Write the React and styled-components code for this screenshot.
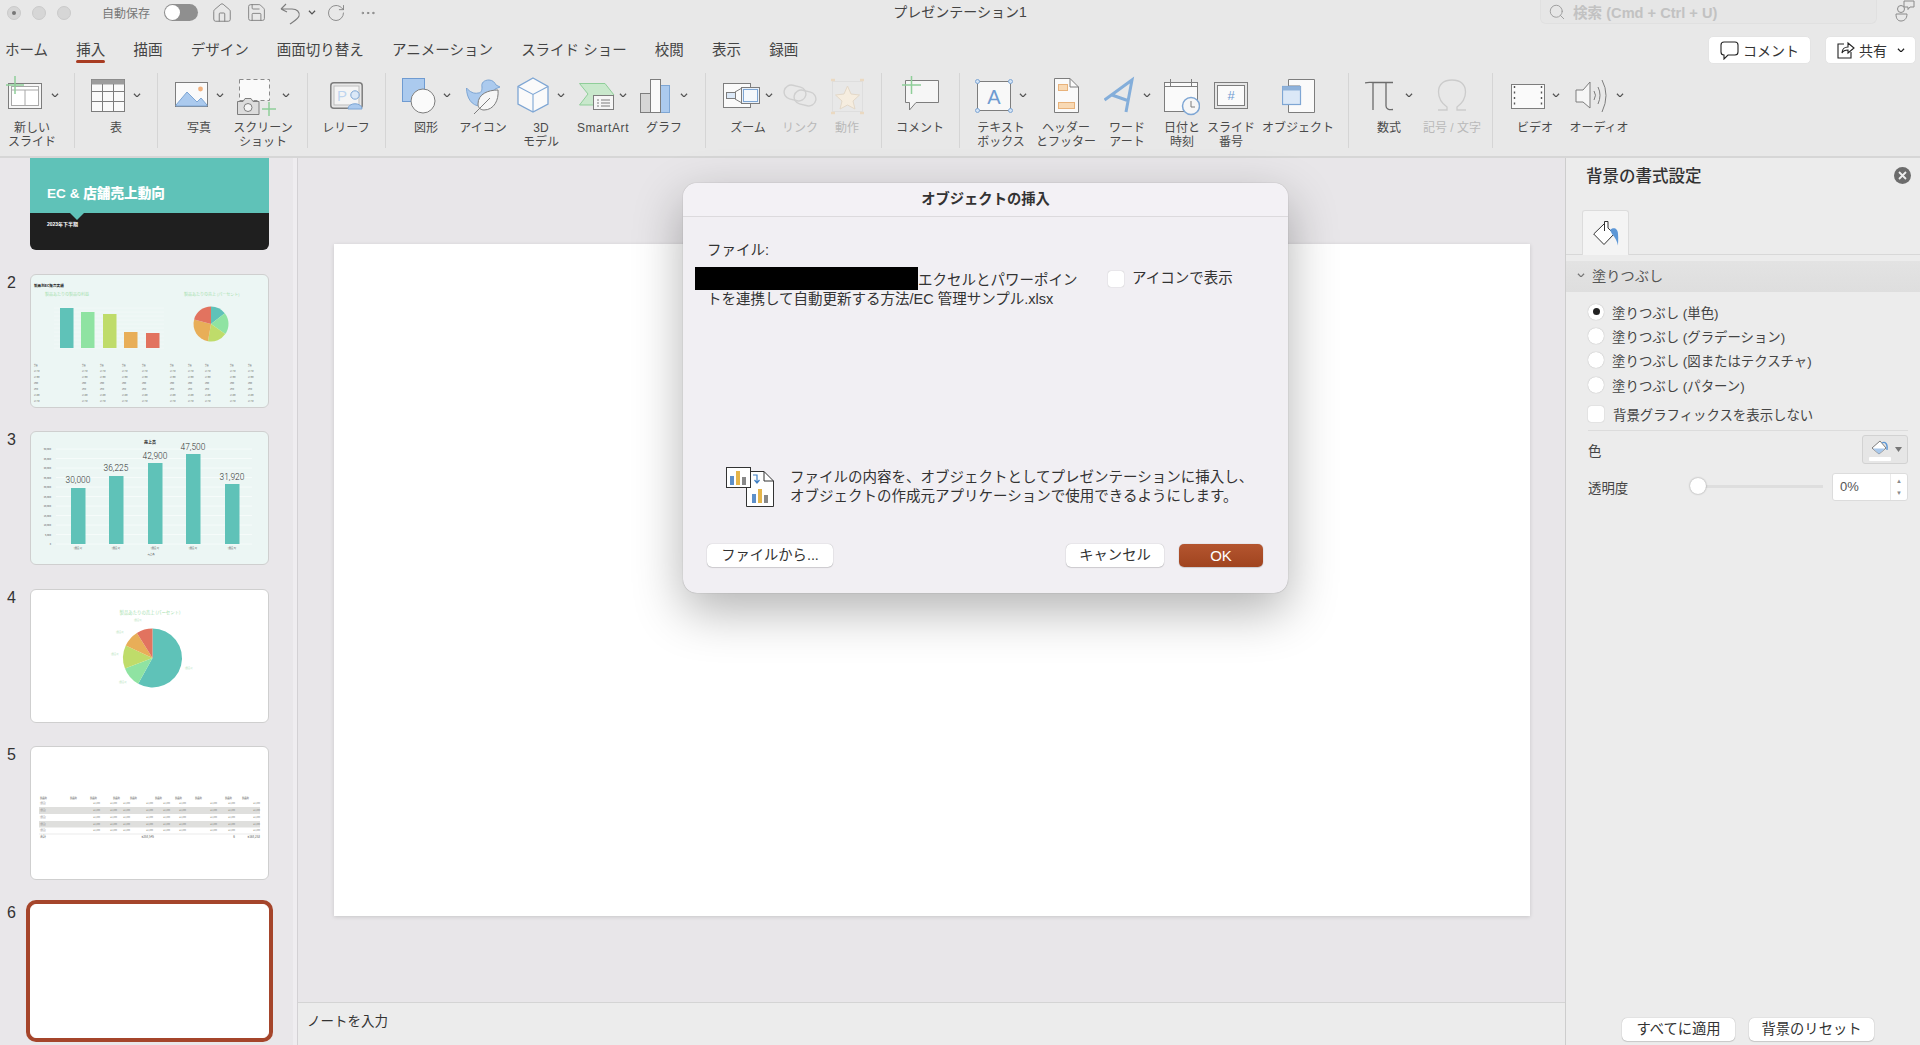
import React from 'react';
import styled, { createGlobalStyle } from 'styled-components';
import { Search, Home, Save, RotateCw, MoreHorizontal } from 'lucide-react';

const GlobalStyle = createGlobalStyle`
  html, body { margin: 0; padding: 0; background: #e8e8e8; }
  body { font-family: "Liberation Sans", "Noto Sans CJK JP", sans-serif; color: #333; }
  * { box-sizing: border-box; }
`;

const GRAY = '#7d7d7d';
const BLUE = '#7ea6d4';
const BLUE_FILL = '#abcaee';
const GREEN = '#8fce99';
const TEAL = '#5fc2b8';
const LIME = '#bfdc6a';
const MINT = '#8fe3a2';
const ORANGE = '#e8ae58';
const RED = '#e2735f';

const Page = styled.div`
  position: relative;
  width: 1920px;
  height: 1045px;
  overflow: hidden;
  display: flex;
  flex-direction: column;
  background: #e8e8e8;
`;

/* title bar */
const TitleBar = styled.div`
  height: 32px;
  display: grid;
  grid-template-columns: 1fr auto 1fr;
  color: #555;
`;
const TitleLeft = styled.div`
  display: flex;
  align-items: center;
  height: 25px;
  padding-left: 7px;
`;
const TrafficLight = styled.span`
  width: 14px;
  height: 14px;
  border-radius: 50%;
  background: #d6d6d6;
  border: 1px solid #cacaca;
  margin-right: 11px;
  display: flex;
  align-items: center;
  justify-content: center;
  &::after {
    content: '';
    width: 4px;
    height: 4px;
    border-radius: 50%;
    background: ${p => (p.$dot ? '#777' : 'transparent')};
  }
`;
const AutoSave = styled.span`
  font-size: 12px;
  color: #777;
  margin-left: 20px;
  width: 62px;
`;
const Toggle = styled.span`
  width: 34px;
  height: 17px;
  border-radius: 9px;
  background: #8f8f8f;
  padding: 1px;
  margin-right: 13px;
  display: flex;
  &::before {
    content: '';
    width: 15px;
    height: 15px;
    border-radius: 50%;
    background: #fff;
  }
`;
const QuickIcon = styled.span`
  display: flex;
  margin-right: ${p => p.$mr ?? 13}px;
  color: #7c7c7c;
`;
const DocTitle = styled.div`
  font-size: 14px;
  line-height: 25px;
  color: #444;
`;
const TitleRight = styled.div`
  display: flex;
  justify-content: flex-end;
  height: 25px;
  padding-right: 5px;
`;
const SearchBox = styled.div`
  width: 337px;
  height: 24px;
  margin-right: 18px;
  border: 1px solid #e0e0e0;
  border-top: 0;
  border-radius: 0 0 6px 6px;
  background: #e6e6e6;
  display: flex;
  align-items: center;
  gap: 7px;
  padding-left: 7px;
  font-size: 14.6px;
  font-weight: 700;
  color: #c2c2c2;
`;

/* tabs */
const TabRow = styled.div`
  height: 36px;
  display: flex;
  align-items: center;
  padding: 0 4px 0 5px;
`;
const Tab = styled.span`
  position: relative;
  font-size: 14.5px;
  color: #444;
  margin-right: 28.2px;
  top: -2px;
  ${p => p.$active && `
    &::after {
      content: '';
      position: absolute;
      left: 0;
      right: 0;
      bottom: -4px;
      height: 3px;
      border-radius: 2px;
      background: #a83c22;
    }
  `}
`;
const TopButton = styled.button`
  height: 28px;
  width: ${p => p.$w}px;
  margin-left: ${p => p.$ml ?? 0}px;
  border: 1px solid #e4e4e4;
  border-radius: 5px;
  background: #fff;
  font: inherit;
  font-size: 14px;
  color: #333;
  display: flex;
  align-items: center;
  justify-content: center;
  gap: 4px;
  padding: 0;
  svg:last-child:not(:first-child) { margin-left: 6px; }
`;
const PushRight = styled.span`
  margin-left: auto;
`;

/* ribbon */
const Ribbon = styled.div`
  height: 90px;
  padding-top: 5px;
  display: flex;
  align-items: flex-start;
  border-bottom: 2px solid #d6d6d6;
`;
const Group = styled.div`
  width: ${p => p.$w}px;
  height: 75px;
  padding: 1px 0 0 ${p => p.$pl ?? 0}px;
  display: flex;
  border-right: ${p => (p.$last ? '0' : '1px solid #d5d5d5')};
`;
const Item = styled.div`
  width: ${p => p.$w}px;
  display: flex;
  flex-direction: column;
  align-items: center;
`;
const IconSlot = styled.div`
  height: 42px;
  display: flex;
  align-items: center;
  gap: ${p => p.$gap ?? 8}px;
  margin-bottom: 5px;
`;
const ItemLabel = styled.span`
  font-size: 12px;
  line-height: 14px;
  text-align: center;
  white-space: nowrap;
  letter-spacing: ${p => (p.$latin ? '0.6px' : '0')};
  color: ${p => (p.$off ? '#b9b9b9' : '#4a4a4a')};
`;

/* body */
const Body = styled.div`
  flex: 1;
  min-height: 0;
  display: flex;
`;
const Sidebar = styled.div`
  width: 298px;
  flex: none;
  padding-right: 5px;
  background: #e9e7ea;
  border-right: 1px solid #d3d1d4;
  box-shadow: inset -4px 0 0 #efedf0;
  display: flex;
  flex-direction: column;
  gap: 23.5px;
`;
const SlideRow = styled.div`
  display: flex;
  align-items: flex-start;
`;
const SlideNum = styled.span`
  width: 30px;
  padding: 0 0 0 7px;
  font-size: 16px;
  line-height: 18px;
  color: #333;
`;
const Thumb = styled.div`
  width: 239px;
  height: 134px;
  border-radius: 6px;
  overflow: hidden;
  background: ${p => p.$bg ?? '#fff'};
  border: 1px solid #cfcfcf;
  ${p => p.$selected && `
    border-color: #fff;
    box-shadow: 0 0 0 4px #a5452b;
  `}
  svg { display: block; }
`;
const TitleThumb = styled.div`
  width: 239px;
  height: 92px;
  border-radius: 0 0 6px 6px;
  overflow: hidden;
  margin-left: 30px;
  background: #1f1f1f;
  color: #fff;
  font-weight: 700;
`;
const TitleBand = styled.div`
  position: relative;
  height: 55px;
  background: ${TEAL};
  padding: 27px 0 0 17px;
  font-size: 13.6px;
  font-weight: 900;
  line-height: 18px;
  &::after {
    content: '';
    position: absolute;
    left: 40px;
    bottom: -7px;
    border: 7px solid transparent;
    border-bottom: 0;
    border-top-color: ${TEAL};
  }
`;
const TitleDate = styled.div`
  padding: 7px 0 0 17px;
  font-size: 5px;
  line-height: 8px;
`;

const Main = styled.div`
  flex: 1;
  min-width: 0;
  display: flex;
  flex-direction: column;
`;
const Stage = styled.div`
  flex: 1;
  display: flex;
  align-items: center;
  justify-content: center;
  background: #e8e6e9;
`;
const BlankSlide = styled.div`
  width: 1196px;
  height: 672px;
  background: #fff;
  box-shadow: 0 1px 4px rgba(0, 0, 0, 0.14);
`;
const Notes = styled.div`
  height: 43px;
  padding: 9px 0 0 9px;
  border-top: 1px solid #d4d4d4;
  background: #ececec;
  font-size: 13.5px;
  line-height: 20px;
  color: #333;
`;

/* format pane */
const Pane = styled.div`
  width: 355px;
  flex: none;
  background: #ececec;
  border-left: 1px solid #cdcdcd;
  display: flex;
  flex-direction: column;
`;
const PaneHead = styled.div`
  display: flex;
  align-items: center;
  justify-content: space-between;
  height: 24px;
  margin-top: 5px;
  padding: 0 9px 0 20px;
  font-size: 16.5px;
  font-weight: 500;
  color: #333;
`;
const CloseDot = styled.span`
  width: 17px;
  height: 17px;
  border-radius: 50%;
  background: #6c6c6c;
  display: flex;
  align-items: center;
  justify-content: center;
`;
const PaneTabs = styled.div`
  margin-top: 23px;
  height: 45px;
  padding-left: 16px;
  border-bottom: 1px solid #d8d8d8;
`;
const PaneTab = styled.div`
  width: 47px;
  height: 45px;
  background: #f4f4f4;
  border: 1px solid #dcdcdc;
  border-bottom: 0;
  border-radius: 3px 3px 0 0;
  display: flex;
  align-items: center;
  justify-content: center;
`;
const SectionHead = styled.div`
  margin-top: 6px;
  height: 31px;
  background: linear-gradient(#e3e3e3, #dedede);
  display: flex;
  align-items: center;
  gap: 7px;
  padding: 0 0 3px 11px;
  font-size: 14.2px;
  color: #555;
`;
const PaneBody = styled.div`
  padding: 7.5px 12px 0 22px;
  font-size: 13.4px;
  color: #444;
`;
const OptionRow = styled.div`
  height: 24.4px;
  display: flex;
  align-items: center;
  gap: 8px;
`;
const Radio = styled.span`
  width: 16px;
  height: 16px;
  border-radius: 50%;
  background: #fff;
  box-shadow: 0 0 1px rgba(0, 0, 0, 0.35);
  display: flex;
  align-items: center;
  justify-content: center;
  &::after {
    content: '';
    width: 7px;
    height: 7px;
    border-radius: 50%;
    background: ${p => (p.$on ? '#222' : 'transparent')};
  }
`;
const CheckBox = styled.span`
  width: 16px;
  height: 16px;
  flex: none;
  border-radius: 3px;
  background: #fff;
  box-shadow: 0 0 1px rgba(0, 0, 0, 0.35);
`;
const CheckRow = styled.div`
  display: flex;
  align-items: center;
  gap: 9px;
  margin-top: 7.5px;
  height: 20px;
  padding-bottom: 1px;
`;
const Rule = styled.div`
  height: 1px;
  margin-top: 5px;
  background: #dcdcdc;
`;
const FieldRow = styled.div`
  display: flex;
  align-items: center;
  justify-content: space-between;
  height: 28px;
  margin-top: ${p => p.$mt}px;
`;
const ColorButton = styled.div`
  width: 46px;
  height: 29px;
  border: 1px solid #d2d2d2;
  border-radius: 3px;
  background: #e6e6e6;
  display: flex;
  align-items: center;
  justify-content: center;
  gap: 4px;
`;
const Track = styled.div`
  position: relative;
  width: 133px;
  height: 3px;
  margin-left: auto;
  margin-right: 9px;
  background: #dedede;
  &::after {
    content: '';
    position: absolute;
    left: 0;
    top: -7px;
    width: 16px;
    height: 16px;
    border-radius: 50%;
    background: #fff;
    box-shadow: 0 0 2px rgba(0, 0, 0, 0.4);
  }
`;
const SpinBox = styled.div`
  width: 76px;
  height: 28px;
  border: 1px solid #dcdcdc;
  border-radius: 3px;
  background: #fff;
  display: flex;
  align-items: center;
  justify-content: space-between;
  padding: 0 0 0 7px;
  font-size: 13px;
  line-height: 30px;
  color: #555;
`;
const Spinner = styled.span`
  width: 17px;
  height: 26px;
  border-left: 1px solid #eaeaea;
  display: flex;
  flex-direction: column;
  align-items: center;
  justify-content: center;
  gap: 6px;
  font-size: 6px;
  line-height: 6px;
  color: #8a8a8a;
`;
const PaneFoot = styled.div`
  margin-top: auto;
  padding: 0 46px 4px 0;
  display: flex;
  justify-content: flex-end;
  gap: 14px;
`;

const PlainButton = styled.button`
  height: 23px;
  width: ${p => p.$w}px;
  border: 0;
  border-radius: 5px;
  background: #fff;
  box-shadow: 0 0 1px rgba(0, 0, 0, 0.35), 0 1px 1px rgba(0, 0, 0, 0.12);
  font: inherit;
  font-size: 14.3px;
  line-height: 20px;
  padding: 0 0 2px;
  color: #333;
`;
const OkButton = styled(PlainButton)`
  background: linear-gradient(#b4552f, #a0441f);
  color: #fff;
  font-weight: 500;
  font-size: 15px;
  padding: 0;
`;

/* dialog */
const Dialog = styled.div`
  position: absolute;
  left: 683px;
  top: 183px;
  width: 605px;
  height: 410px;
  border-radius: 14px;
  background: #f1eff3;
  box-shadow: 0 0 1px rgba(0, 0, 0, 0.4), 0 18px 50px rgba(0, 0, 0, 0.3);
  display: flex;
  flex-direction: column;
`;
const DialogHead = styled.div`
  height: 34px;
  flex: none;
  border-bottom: 1px solid #dcdadd;
  background: #f3f1f5;
  border-radius: 14px 14px 0 0;
  text-align: center;
  font-size: 14.3px;
  line-height: 33px;
  font-weight: 700;
  color: #333;
`;
const DialogBody = styled.div`
  flex: 1;
  display: flex;
  flex-direction: column;
  padding: 24px 25px 26px 24px;
  font-size: 14.5px;
  line-height: 19.5px;
  color: #333;
`;
const FileRow = styled.div`
  display: flex;
  margin-top: 10px;
`;
const FilePath = styled.div`
  width: 401px;
  flex: none;
  white-space: nowrap;
`;
const Redacted = styled.span`
  display: inline-block;
  vertical-align: top;
  width: 223px;
  height: 23px;
  margin: -4px 0 0 -12px;
  background: #000;
`;
const IconOption = styled.label`
  display: flex;
  align-items: center;
  gap: 8px;
  height: 16px;
`;
const InfoRow = styled.div`
  margin-top: auto;
  display: flex;
  align-items: center;
  gap: 16px;
  padding-left: 19px;
  white-space: nowrap;
`;
const DialogFoot = styled.div`
  margin-top: 37px;
  display: flex;
  gap: 15px;
`;
const FootSpacer = styled.span`
  flex: 1;
`;

/* small drawings */
const Chevron = ({ color = '#555', size = 8 }) => (
  <svg width={size} height={size * 0.6} viewBox="0 0 8 5" fill="none" stroke={color} strokeWidth="1.3">
    <polyline points="0.8,0.8 4,4 7.2,0.8" />
  </svg>
);

const Icon = ({ w, children }) => (
  <svg width={w} height="42" viewBox={`0 0 ${w} 42`} fill="none">{children}</svg>
);

const NewSlideIcon = () => (
  <Icon w={36}>
    <rect x="2.5" y="9.5" width="33" height="25" fill="#f6f6f6" stroke={GRAY} />
    <rect x="5.5" y="12.5" width="27" height="19" fill="#fff" stroke="#a8a8a8" />
    <path d="M5 16H33M19 16V31" stroke="#a8a8a8" />
    <path d="M0 11H18M9 2V20" stroke={GREEN} strokeWidth="1.5" />
  </Icon>
);
const TableIcon = () => (
  <Icon w={34}>
    <rect x="0.5" y="5.5" width="33" height="32" fill="#fafafa" stroke={GRAY} />
    <rect x="0.5" y="5.5" width="33" height="5" fill="#9c9c9c" />
    <path d="M0 17.5H34M0 27.5H34M11.5 10V38M22.5 10V38" stroke={GRAY} />
  </Icon>
);
const PhotoIcon = () => (
  <Icon w={33}>
    <rect x="0.5" y="8.5" width="32" height="24" fill="#fafafa" stroke={GRAY} />
    <path d="M1 31L12 18L22 28L26 24L32 31V32H1Z" fill={BLUE_FILL} stroke={BLUE} />
    <circle cx="25.5" cy="15" r="2.4" fill="#f2b27e" />
  </Icon>
);
const ScreenshotIcon = () => (
  <Icon w={40}>
    <rect x="2.5" y="5.5" width="30" height="21" fill="#fafafa" stroke="#8a8a8a" strokeDasharray="4 3" />
    <path d="M0.5 27.5H6L8 24.5H14L16 27.5H22V40.5H0.5Z" fill="#dcdcdc" stroke={GRAY} />
    <circle cx="11" cy="33.5" r="4" fill="#f4f4f4" stroke={GRAY} />
    <path d="M25 35H39M32 28V42" stroke={GREEN} strokeWidth="1.5" />
  </Icon>
);
const ReliefIcon = () => (
  <Icon w={33}>
    <rect x="0.8" y="8.8" width="31.4" height="25.4" rx="3" stroke={GRAY} strokeWidth="1.5" />
    <rect x="4" y="12" width="25" height="19" fill="#f4f4f4" stroke="#bdbdbd" />
    <text x="7" y="27" fontSize="15" fontFamily="Liberation Sans, sans-serif" fill="#bdd4ef">P</text>
    <circle cx="25" cy="21" r="4.2" fill="#dbe8f7" stroke={BLUE} />
    <path d="M18 35C18 28 32 28 32 35Z" fill={BLUE_FILL} stroke={BLUE} />
  </Icon>
);
const ShapesIcon = () => (
  <Icon w={34}>
    <rect x="0.5" y="4.5" width="22" height="23" fill={BLUE_FILL} stroke="#6f9bd1" />
    <circle cx="21" cy="27" r="12" fill="#fafafa" stroke={GRAY} />
  </Icon>
);
const DuckIcon = () => (
  <Icon w={34}>
    <path d="M0.5 14C4 18 8 20 12 19C15 19 16 17 16 13C15 9 18 6 23 6C27 6 29 9 30 11L34 13L29 15C29 20 27 24 24 26L14 32C6 32 0.5 24 0.5 14Z" fill={BLUE_FILL} stroke={BLUE} />
    <path d="M12 30C12 20 22 16 32 16C33 26 28 36 18 36C15 36 12 34 12 30Z" fill="#f6f6f6" stroke={GRAY} />
    <path d="M8 40L24 24" stroke={GRAY} />
  </Icon>
);
const CubeIcon = () => (
  <Icon w={32}>
    <path d="M16 4L31 12.5V30L16 38L1 30V12.5Z" fill="#fafafa" stroke={BLUE} strokeWidth="1.3" />
    <path d="M1 12.5L16 20.5L31 12.5M16 20.5V38" stroke={BLUE} strokeWidth="1.1" />
  </Icon>
);
const SmartArtIcon = () => (
  <Icon w={36}>
    <path d="M0.5 9.5H26L35 21L26 31H0.5L9 20Z" fill="#c9e8cc" stroke={GREEN} />
    <rect x="14.5" y="21.5" width="20" height="14" fill="#f6f6f6" stroke={GRAY} />
    <path d="M18 26H20M22 26H31M18 29H20M22 29H31M18 32H20M22 32H31" stroke={GRAY} />
  </Icon>
);
const ChartIcon = () => (
  <Icon w={30}>
    <rect x="0.5" y="19.5" width="10" height="19" fill="#d6d6d6" stroke={GRAY} />
    <rect x="20" y="11.5" width="9.5" height="27" fill={BLUE_FILL} stroke={BLUE} />
    <rect x="10.5" y="5.5" width="10" height="33" fill="#fafafa" stroke={GRAY} />
  </Icon>
);
const ZoomIcon = () => (
  <Icon w={37}>
    <rect x="0.5" y="9.5" width="27" height="24" fill="#fafafa" stroke={GRAY} />
    <rect x="3.5" y="18.5" width="9" height="6" fill="#dbe8f7" stroke={GRAY} />
    <path d="M12 18L19 14M12 25L19 29" stroke={GRAY} />
    <rect x="18.5" y="13.5" width="18" height="16" fill="#e9f1fa" stroke={GRAY} />
    <rect x="20.5" y="15.5" width="14" height="12" fill="#f4f8fc" stroke={BLUE} />
  </Icon>
);
const LinkIcon = () => (
  <Icon w={34}>
    <rect x="1" y="12" width="22" height="14" rx="7" transform="rotate(14 12 19)" stroke="#cfcfcf" strokeWidth="1.4" />
    <rect x="11" y="17" width="22" height="14" rx="7" transform="rotate(14 22 24)" stroke="#cfcfcf" strokeWidth="1.4" />
  </Icon>
);
const ActionIcon = () => (
  <Icon w={33}>
    <rect x="1.5" y="7.5" width="30" height="30" stroke="#dedede" />
    <path d="M0 6H4M29 6H33M0 39H4M29 39H33" stroke="#ead9c2" strokeWidth="2.5" />
    <path d="M16.5 12L20 20L28.5 21L22 27L24 35L16.5 31L9 35L11 27L4.5 21L13 20Z" fill="#f6eddf" stroke="#e3d8c8" />
  </Icon>
);
const CommentIcon = () => (
  <Icon w={37}>
    <path d="M3.5 6.5H36.5V28.5H14L7.5 36V28.5H3.5Z" fill="#f6f6f6" stroke={GRAY} />
    <path d="M0 11H19M9.5 2V20" stroke={GREEN} strokeWidth="1.5" />
  </Icon>
);
const TextBoxIcon = () => (
  <Icon w={38}>
    <rect x="2.5" y="7.5" width="33" height="29" fill="#f8f8f8" stroke={GRAY} />
    <text x="19" y="30" textAnchor="middle" fontSize="20" fontFamily="Liberation Sans, sans-serif" fill="#6f9bd1">A</text>
    {[[2.5, 7.5], [35.5, 7.5], [2.5, 36.5], [35.5, 36.5]].map(([cx, cy]) => (
      <circle key={`${cx}${cy}`} cx={cx} cy={cy} r="2" fill="#d3e3f5" stroke={BLUE} />
    ))}
  </Icon>
);
const HeaderIcon = () => (
  <Icon w={25}>
    <path d="M0.5 4.5H16L24.5 13V38.5H0.5Z" fill="#fafafa" stroke={GRAY} />
    <path d="M16 4.5V13H24.5" stroke={GRAY} />
    <rect x="4.5" y="10.5" width="9" height="6" fill="#f8d9b4" stroke="#e8b27a" />
    <rect x="4.5" y="28.5" width="16" height="6" fill="#f8d9b4" stroke="#e8b27a" />
  </Icon>
);
const WordArtIcon = () => (
  <Icon w={31}>
    <path d="M0.5 26L28 6L22 38M8 21L25 27" stroke="#84aeda" strokeWidth="3" />
  </Icon>
);
const DateIcon = () => (
  <Icon w={36}>
    <rect x="0.5" y="8.5" width="33" height="29" fill="#fafafa" stroke={GRAY} />
    <path d="M0 12.5H34M6.5 5V12M27.5 5V12" stroke={GRAY} />
    <circle cx="27" cy="32" r="8.5" fill="#f6f6f6" stroke={BLUE} strokeWidth="1.5" />
    <path d="M27 27V33H31" stroke={GRAY} />
  </Icon>
);
const SlideNumIcon = () => (
  <Icon w={34}>
    <rect x="0.5" y="8.5" width="33" height="26" fill="#e6e6e6" stroke={GRAY} />
    <rect x="3.5" y="11.5" width="27" height="20" fill="#fafafa" stroke={GRAY} />
    <text x="17" y="26" textAnchor="middle" fontSize="13" fontFamily="Liberation Sans, sans-serif" fill="#6f9bd1">#</text>
  </Icon>
);
const ObjectIcon = () => (
  <Icon w={33}>
    <path d="M6.5 5.5H32.5V38.5H6.5V30H18V12H6.5Z" fill="#fafafa" stroke={GRAY} />
    <rect x="0.5" y="12.5" width="18" height="18" fill="#dbe8f7" stroke={BLUE} strokeWidth="1.2" />
    <rect x="0.5" y="12.5" width="18" height="4" fill="#8fb2da" />
  </Icon>
);
const PiIcon = () => (
  <Icon w={30}>
    <path d="M0 9C3 8 5 8.5 8 8.5H28M8 8.5V36M21 8.5V32C21 35 24 36 28 35.5" stroke="#6c6c6c" strokeWidth="1.3" />
  </Icon>
);
const OmegaIcon = () => (
  <Icon w={30}>
    <path d="M1 36H10V33C3 28 1.5 22 1.5 18C1.5 10 7 6 15 6C23 6 28.5 10 28.5 18C28.5 22 27 28 20 33V36H29" stroke="#cbcbcb" strokeWidth="1.3" />
  </Icon>
);
const VideoIcon = () => (
  <Icon w={34}>
    <rect x="0.5" y="10.5" width="33" height="24" fill="#fafafa" stroke={GRAY} />
    <path d="M3.5 12V34M30.5 12V34" stroke="#555" strokeWidth="1.4" strokeDasharray="2 3.5" />
  </Icon>
);
const AudioIcon = () => (
  <Icon w={32}>
    <path d="M1 16H8L15 8V34L8 28H1Z" fill="#f6f6f6" stroke={GRAY} />
    <path d="M19 17Q22 21 19 26M23 13Q27 21 23 30M27 6Q35 21 27 38" stroke={GRAY} />
  </Icon>
);

const UndoIcon = () => (
  <svg width="22" height="24" viewBox="0 0 22 24" fill="none" stroke="#7c7c7c" strokeWidth="1.1">
    <path d="M1 8L6 3M1 8L7 11M1 8H12C17 8 20 11 19 15C18 18 14 20 10 23" />
  </svg>
);
const PeopleIcon = () => (
  <svg width="20" height="24" viewBox="0 0 20 24" fill="none" stroke="#8a8a8a" strokeWidth="1">
    <circle cx="6" cy="9" r="3.5" />
    <path d="M1 14H12C12 19 9 21 6 21C3 21 1 19 1 14Z" />
    <path d="M9 1H19V7H15L13 9.5V7H9Z" />
  </svg>
);
const BubbleIcon = () => (
  <svg width="19" height="19" viewBox="0 0 19 19" fill="none" stroke="#222" strokeWidth="1.1">
    <path d="M4 1H15C17 1 18 2 18 4V11C18 13 17 14 15 14H8L4 18V14C2 14 1 13 1 11V4C1 2 2 1 4 1Z" />
  </svg>
);
const ShareIcon = () => (
  <svg width="19" height="19" viewBox="0 0 19 19" fill="none" stroke="#222" strokeWidth="1.1">
    <path d="M8 3H2V17H15V11" />
    <path d="M6 12C6 8 9 6 12 6V2L18 7L12 12V9C10 9 7 10 6 12Z" />
  </svg>
);
const FillIcon = () => (
  <svg width="26" height="25" viewBox="0 0 26 25" fill="none">
    <path d="M0.7 13L11 3L21 13L11 23.5Z" fill="#fff" stroke="#333" />
    <path d="M11.5 10V0.5H15V7" stroke="#333" fill="#fff" />
    <path d="M17 9C20 6 25 7 25 13C25.5 18 25 22 25 24.5C24 20 22 16 19 13Z" fill="#5d97d6" />
  </svg>
);
const SmallFillIcon = () => (
  <svg width="22" height="24" viewBox="0 0 22 24" fill="none">
    <path d="M3 10L11 3L17 10L10 16Z" fill="#fff" stroke={GRAY} />
    <path d="M4 10.5H16L10 16Z" fill="#a8c8ec" />
    <path d="M13 5C16 3 19 6 18 12" stroke="#5d97d6" strokeWidth="1.3" />
    <rect x="0" y="19" width="22" height="4" rx="1" fill="#fff" />
  </svg>
);
const EmbedIcon = () => (
  <svg width="48" height="40" viewBox="0 0 48 40" fill="none">
    <path d="M20.5 4.5H38L47.5 14V39.5H20.5Z" fill="#fff" stroke="#333" />
    <path d="M38 4.5V14H47.5" stroke="#333" />
    <rect x="0.5" y="0.5" width="24" height="20" fill="#fff" stroke="#333" />
    <rect x="4" y="9" width="4" height="9" fill="#5d8fc9" />
    <rect x="10" y="4" width="4" height="14" fill="#e5b54a" />
    <rect x="16" y="10" width="4" height="8" fill="#888" />
    <rect x="26" y="27" width="4" height="9" fill="#5d8fc9" />
    <rect x="32" y="22" width="4" height="14" fill="#e5b54a" />
    <rect x="38" y="28" width="4" height="8" fill="#888" />
    <path d="M27 8H31V15M28.5 13L31 16L33.5 13" stroke="#3f7fc4" strokeWidth="1.2" />
  </svg>
);

/* slide thumbnails */
const wedge = (cx, cy, r, a0, a1) => {
  const p = a => [cx + r * Math.sin((a * Math.PI) / 180), cy - r * Math.cos((a * Math.PI) / 180)];
  const [x0, y0] = p(a0);
  const [x1, y1] = p(a1);
  return `M${cx} ${cy}L${x0} ${y0}A${r} ${r} 0 ${a1 - a0 > 180 ? 1 : 0} 1 ${x1} ${y1}Z`;
};
const THUMB_FONT = 'Noto Sans CJK JP, sans-serif';

const Pie = ({ cx, cy, r, stops }) => {
  const colors = [TEAL, MINT, LIME, ORANGE, RED];
  return stops.map((stop, i) => (
    <path key={stop} d={wedge(cx, cy, r, i ? stops[i - 1] : 0, stop)} fill={colors[i]} />
  ));
};

const TABLE_ROWS = ['¥1,200', '¥1,150', '¥1,300', '¥900', '¥950'];

const SalesDetailThumb = () => {
  const bars = [[30, 34, TEAL], [51, 38, MINT], [73, 40, LIME], [94, 58, ORANGE], [116, 59, RED]];
  const cols = [4, 52, 70, 92, 112, 140, 158, 175, 200, 218];
  return (
    <svg width="237" height="132" viewBox="1 1 237 132" fontFamily={THUMB_FONT}>
      <text x="4" y="13" fontSize="3.6" fontWeight="700" fill="#222">製品別EC販売実績</text>
      <text x="15" y="22" fontSize="4" fill="#a5e0ad">製品あたりの製品の利益</text>
      <text x="154" y="22" fontSize="4" fill="#a5e0ad">製品あたりの売上 (パーセント)</text>
      {[34, 38, 42, 46, 50, 54, 58, 62, 66, 70, 74].map(y => (
        <path key={y} d={`M24 ${y}H134`} stroke="#f7fbfa" strokeWidth="0.6" />
      ))}
      {bars.map(([x, y, c]) => <rect key={x} x={x} y={y} width="13.5" height={74 - y} fill={c} />)}
      <Pie cx={181} cy={50} r={17.5} stops={[52, 125, 190, 285, 360]} />
      {[92, 97.5, 103.5, 109.5, 115.5, 121.5, 127.5].map((y, r) =>
        cols.map(x => (
          <text key={`${x}-${r}`} x={x} y={y} fontSize="1.8" fill="#444">{r ? TABLE_ROWS[r % 5] : '製品'}</text>
        ))
      )}
    </svg>
  );
};

const SalesBarThumb = () => {
  const bars = [[41, 57, '30,000', 50], [79, 45, '36,225', 38], [118, 32, '42,900', 26], [156, 23, '47,500', 17], [195, 53, '31,920', 47]];
  const ticks = [18, 27.5, 37, 46.5, 56, 65.5, 75, 84.5, 94, 103.5, 113];
  return (
    <svg width="237" height="132" viewBox="1 1 237 132" fontFamily={THUMB_FONT}>
      <text x="120" y="13" textAnchor="middle" fontSize="4" fontWeight="700" fill="#222">売上高</text>
      {ticks.map((y, i) => (
        <g key={y}>
          <path d={`M26 ${y}H222`} stroke="#fafdfc" strokeWidth="0.7" />
          <text x="21" y={y + 1} textAnchor="end" fontSize="2.4" fill="#555">{(50000 - i * 5000).toLocaleString('en-US')}</text>
        </g>
      ))}
      {bars.map(([x, y, label, ly], i) => (
        <g key={x}>
          <rect x={x} y={y} width="14.5" height={113 - y} fill={TEAL} />
          <text x={x + 7} y={ly + 2} textAnchor="middle" fontSize="8.4" fontFamily="Roboto, sans-serif" fontWeight="300" fill="#333">{label}</text>
          <text x={x + 7} y="118" textAnchor="middle" fontSize="2.4" fill="#444">{`[器具 ${i + 1}]`}</text>
        </g>
      ))}
      <text x="121" y="124" textAnchor="middle" fontSize="2.4" fill="#444">売上高</text>
    </svg>
  );
};

const SharePieThumb = () => (
  <svg width="237" height="132" viewBox="1 1 237 132" fontFamily={THUMB_FONT}>
    <text x="120" y="25" textAnchor="middle" fontSize="4.4" fill="#a5e0ad">製品あたりの売上 (パーセント)</text>
    <Pie cx={122.5} cy={69} r={29.5} stops={[209, 249, 295, 328, 360]} />
    <text x="155" y="80" fontSize="2.2" fill="#a5e0ad">[器具 1]</text>
    <text x="89" y="94" fontSize="2.2" fill="#a5e0ad">[器具 2]</text>
    <text x="81" y="66" fontSize="2.2" fill="#a5e0ad">[器具 3]</text>
    <text x="86" y="44" fontSize="2.2" fill="#a5e0ad">[器具 4]</text>
    <text x="104" y="32" fontSize="2.2" fill="#a5e0ad">[器具 5]</text>
  </svg>
);

const SalesTableThumb = () => {
  const cols = [70, 87, 100, 123, 140, 156, 187, 205, 230];
  const rows = [58, 65, 72, 78.5, 85];
  return (
    <svg width="237" height="132" viewBox="1 1 237 132" fontFamily={THUMB_FONT}>
      <rect x="9" y="61" width="221" height="7" fill="#dfdfdd" />
      <rect x="9" y="75" width="221" height="6.5" fill="#dfdfdd" />
      <path d="M9 88H230" stroke="#bbb" strokeWidth="0.3" />
      {[10, 40, 60, 83, 100, 125, 145, 165, 195, 212].map(x => (
        <text key={x} x={x} y="53" fontSize="2.3" fontWeight="500" fill="#555">製品別</text>
      ))}
      {rows.map(y => (
        <g key={y}>
          <text x="10" y={y} fontSize="2.2" fill="#777">[器具]</text>
          {cols.map(x => (
            <text key={x} x={x} y={y} textAnchor="end" fontSize="2.2" fill="#777">¥1,200</text>
          ))}
        </g>
      ))}
      <text x="10" y="92" fontSize="3" fill="#555">合計</text>
      <text x="124" y="92" textAnchor="end" fontSize="3" fill="#555">¥258,545</text>
      <text x="205" y="92" textAnchor="end" fontSize="3" fill="#555">6</text>
      <text x="230" y="92" textAnchor="end" fontSize="3" fill="#555">¥168,253</text>
    </svg>
  );
};

const RIBBON = [
  { w: 75, items: [{ w: 64, icon: NewSlideIcon, label: ['新しい', 'スライド'], more: true, gap: 9 }] },
  { w: 83, items: [{ w: 82, icon: TableIcon, label: ['表'], more: true }] },
  { w: 150, pl: 10, items: [
    { w: 62, icon: PhotoIcon, label: ['写真'], more: true },
    { w: 66, icon: ScreenshotIcon, label: ['スクリーン', 'ショット'], more: true, gap: 5 },
  ] },
  { w: 78, items: [{ w: 76, icon: ReliefIcon, label: ['レリーフ'] }] },
  { w: 320, pl: 10, items: [
    { w: 60, icon: ShapesIcon, label: ['図形'], more: true, gap: 7 },
    { w: 54, icon: DuckIcon, label: ['アイコン'] },
    { w: 62, icon: CubeIcon, label: ['3D', 'モデル'], more: true },
    { w: 62, icon: SmartArtIcon, label: ['SmartArt'], more: true, gap: 4, latin: true },
    { w: 60, icon: ChartIcon, label: ['グラフ'], more: true, gap: 10 },
  ] },
  { w: 176, pl: 10, items: [
    { w: 64, icon: ZoomIcon, label: ['ズーム'], more: true, gap: 5 },
    { w: 40, icon: LinkIcon, label: ['リンク'], off: true },
    { w: 54, icon: ActionIcon, label: ['動作'], off: true },
  ] },
  { w: 78, items: [{ w: 76, icon: CommentIcon, label: ['コメント'] }] },
  { w: 389, pl: 10, items: [
    { w: 62, icon: TextBoxIcon, label: ['テキスト', 'ボックス'], more: true, gap: 6 },
    { w: 68, icon: HeaderIcon, label: ['ヘッダー', 'とフッター'] },
    { w: 54, icon: WordArtIcon, label: ['ワード', 'アート'], more: true, gap: 8 },
    { w: 56, icon: DateIcon, label: ['日付と', '時刻'] },
    { w: 42, icon: SlideNumIcon, label: ['スライド', '番号'] },
    { w: 92, icon: ObjectIcon, label: ['オブジェクト'] },
  ] },
  { w: 144, pl: 10, items: [
    { w: 60, icon: PiIcon, label: ['数式'], more: true, gap: 10 },
    { w: 66, icon: OmegaIcon, label: ['記号 / 文字'], off: true },
  ] },
  { w: 200, pl: 10, last: true, items: [
    { w: 64, icon: VideoIcon, label: ['ビデオ'], more: true, gap: 7 },
    { w: 64, icon: AudioIcon, label: ['オーディオ'], more: true, gap: 9 },
  ] },
];

const TABS = ['ホーム', '挿入', '描画', 'デザイン', '画面切り替え', 'アニメーション', 'スライド ショー', '校閲', '表示', '録画'];
const FILL_OPTIONS = ['塗りつぶし (単色)', '塗りつぶし (グラデーション)', '塗りつぶし (図またはテクスチャ)', '塗りつぶし (パターン)'];

const App = () => (
  <Page>
    <GlobalStyle />
    <TitleBar>
      <TitleLeft>
        <TrafficLight $dot />
        <TrafficLight />
        <TrafficLight />
        <AutoSave>自動保存</AutoSave>
        <Toggle />
        <QuickIcon><Home size={22} strokeWidth={1} /></QuickIcon>
        <QuickIcon><Save size={21} strokeWidth={1} /></QuickIcon>
        <QuickIcon $mr={6}><UndoIcon /></QuickIcon>
        <QuickIcon $mr={10}><Chevron /></QuickIcon>
        <QuickIcon $mr={13}><RotateCw size={20} strokeWidth={1} /></QuickIcon>
        <QuickIcon><MoreHorizontal size={18} strokeWidth={1.2} /></QuickIcon>
      </TitleLeft>
      <DocTitle>プレゼンテーション1</DocTitle>
      <TitleRight>
        <SearchBox><Search size={18} strokeWidth={1.2} color="#999" />検索 (Cmd + Ctrl + U)</SearchBox>
        <PeopleIcon />
      </TitleRight>
    </TitleBar>

    <TabRow>
      {TABS.map(tab => <Tab key={tab} $active={tab === '挿入'}>{tab}</Tab>)}
      <PushRight />
      <TopButton $w={103}><BubbleIcon />コメント</TopButton>
      <TopButton $w={91} $ml={14}><ShareIcon />共有<Chevron color="#222" /></TopButton>
    </TabRow>

    <Ribbon>
      {RIBBON.map((group, g) => (
        <Group key={g} $w={group.w} $pl={group.pl} $last={group.last}>
          {group.items.map(({ w, icon: RibbonIcon, label, more, gap, off, latin }) => (
            <Item key={label[0]} $w={w}>
              <IconSlot $gap={gap}>
                <RibbonIcon />
                {more && <Chevron />}
              </IconSlot>
              {label.map(line => <ItemLabel key={line} $off={off} $latin={latin}>{line}</ItemLabel>)}
            </Item>
          ))}
        </Group>
      ))}
    </Ribbon>

    <Body>
      <Sidebar>
        <TitleThumb>
          <TitleBand>EC &amp; 店舗売上動向</TitleBand>
          <TitleDate>2023年下半期</TitleDate>
        </TitleThumb>
        <SlideRow><SlideNum>2</SlideNum><Thumb $bg="#ecf6f4"><SalesDetailThumb /></Thumb></SlideRow>
        <SlideRow><SlideNum>3</SlideNum><Thumb $bg="#ecf6f4"><SalesBarThumb /></Thumb></SlideRow>
        <SlideRow><SlideNum>4</SlideNum><Thumb><SharePieThumb /></Thumb></SlideRow>
        <SlideRow><SlideNum>5</SlideNum><Thumb><SalesTableThumb /></Thumb></SlideRow>
        <SlideRow><SlideNum>6</SlideNum><Thumb $selected /></SlideRow>
      </Sidebar>

      <Main>
        <Stage><BlankSlide /></Stage>
        <Notes>ノートを入力</Notes>
      </Main>

      <Pane>
        <PaneHead>
          背景の書式設定
          <CloseDot>
            <svg width="9" height="9" viewBox="0 0 9 9" stroke="#eee" strokeWidth="1.8"><path d="M1 1L8 8M8 1L1 8" /></svg>
          </CloseDot>
        </PaneHead>
        <PaneTabs><PaneTab><FillIcon /></PaneTab></PaneTabs>
        <SectionHead><Chevron color="#777" />塗りつぶし</SectionHead>
        <PaneBody>
          {FILL_OPTIONS.map((option, i) => (
            <OptionRow key={option}><Radio $on={i === 0} />{option}</OptionRow>
          ))}
          <CheckRow><CheckBox />背景グラフィックスを表示しない</CheckRow>
          <Rule />
          <FieldRow $mt={5}>
            色
            <ColorButton>
              <SmallFillIcon />
              <svg width="7" height="5" viewBox="0 0 7 5" fill="#777"><path d="M0 0H7L3.5 5Z" /></svg>
            </ColorButton>
          </FieldRow>
          <FieldRow $mt={9}>
            透明度
            <Track />
            <SpinBox>
              0%
              <Spinner><span>▲</span><span>▼</span></Spinner>
            </SpinBox>
          </FieldRow>
        </PaneBody>
        <PaneFoot>
          <PlainButton $w={113}>すべてに適用</PlainButton>
          <PlainButton $w={125}>背景のリセット</PlainButton>
        </PaneFoot>
      </Pane>
    </Body>

    <Dialog>
      <DialogHead>オブジェクトの挿入</DialogHead>
      <DialogBody>
        <div>ファイル:</div>
        <FileRow>
          <FilePath>
            <Redacted />エクセルとパワーポイン<br />
            トを連携して自動更新する方法/EC 管理サンプル.xlsx
          </FilePath>
          <IconOption><CheckBox />アイコンで表示</IconOption>
        </FileRow>
        <InfoRow>
          <EmbedIcon />
          <div>
            ファイルの内容を、オブジェクトとしてプレゼンテーションに挿入し、<br />
            オブジェクトの作成元アプリケーションで使用できるようにします。
          </div>
        </InfoRow>
        <DialogFoot>
          <PlainButton $w={126}>ファイルから...</PlainButton>
          <FootSpacer />
          <PlainButton $w={98}>キャンセル</PlainButton>
          <OkButton $w={84}>OK</OkButton>
        </DialogFoot>
      </DialogBody>
    </Dialog>
  </Page>
);

export default App;
